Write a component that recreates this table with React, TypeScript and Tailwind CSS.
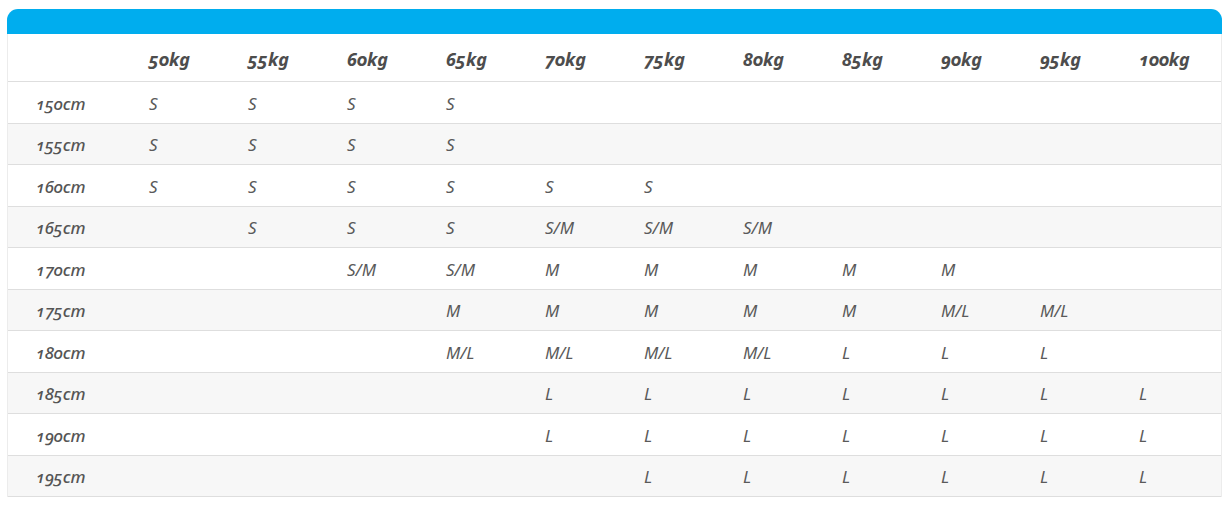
const weights = ["50kg", "55kg", "60kg", "65kg", "70kg", "75kg", "80kg", "85kg", "90kg", "95kg", "100kg"];

const rows: [string, string[]][] = [
  ["150cm", ["S", "S", "S", "S", "", "", "", "", "", "", ""]],
  ["155cm", ["S", "S", "S", "S", "", "", "", "", "", "", ""]],
  ["160cm", ["S", "S", "S", "S", "S", "S", "", "", "", "", ""]],
  ["165cm", ["", "S", "S", "S", "S/M", "S/M", "S/M", "", "", "", ""]],
  ["170cm", ["", "", "S/M", "S/M", "M", "M", "M", "M", "M", "", ""]],
  ["175cm", ["", "", "", "M", "M", "M", "M", "M", "M/L", "M/L", ""]],
  ["180cm", ["", "", "", "M/L", "M/L", "M/L", "M/L", "L", "L", "L", ""]],
  ["185cm", ["", "", "", "", "L", "L", "L", "L", "L", "L", "L"]],
  ["190cm", ["", "", "", "", "L", "L", "L", "L", "L", "L", "L"]],
  ["195cm", ["", "", "", "", "", "L", "L", "L", "L", "L", "L"]],
];

export default function App() {
  return (
    <div className="min-h-screen bg-white pt-[9px] px-[7px] font-['Noto_Sans','Lato',sans-serif] italic oldstyle-nums">
      <div className="w-[1215px]">
        {/* Blue header bar */}
        <div className="h-[25px] bg-[#00adee] rounded-t-[11px]" />

        {/* Table */}
        <div className="border-l border-r border-[#ececec]">
          <div className="grid grid-cols-[113px_repeat(10,99px)_1fr] h-[48px] items-center bg-white border-b border-[#dedede]">
            <div />
            {weights.map((w) => (
              <div key={w} className="pl-[28px] pt-[3px] text-[18px] font-bold text-[#4d4d4d]">
                {w}
              </div>
            ))}
          </div>

          {rows.map(([h, sizes], i) => (
            <div
              key={h}
              className={
                "grid grid-cols-[113px_repeat(10,99px)_1fr] h-[41.5px] items-center border-b border-[#dedede] text-[17px] text-[#5a5a5a] " +
                (i % 2 === 0 ? "bg-white" : "bg-[#f7f7f7]")
              }
            >
              <div className="pl-[28px] pt-[2px] font-medium text-[17px] text-[#555]">{h}</div>
              {sizes.map((s, j) => (
                <div key={j} className="pl-[28px] pt-[2px]">
                  {s}
                </div>
              ))}
            </div>
          ))}
        </div>
      </div>
    </div>
  );
}
